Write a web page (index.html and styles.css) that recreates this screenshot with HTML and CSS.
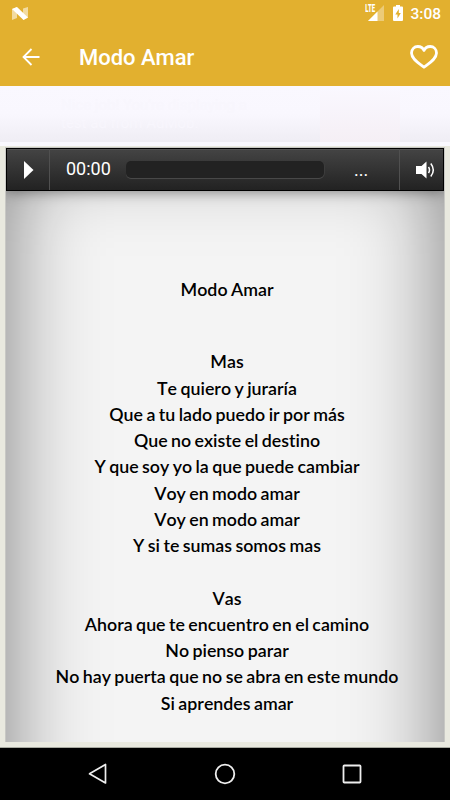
FILE: index.html
```html
<!DOCTYPE html>
<html lang="es">
<head>
    <meta charset="UTF-8">
    <meta name="viewport" content="width=device-width, initial-scale=1.0">
    <title>Modo Amar</title>
    <link rel="stylesheet" href="styles.css">
</head>
<body>
    <div class="screen">
        <header class="header">
            <div class="status-bar">
                <svg class="n-logo" width="16" height="13" viewBox="0 0 16 13">
                    <path d="M0 2 L5 0 V11 L0 13 Z M11 1.5 L16 0 V10.5 L11 13 Z" fill="#fff" opacity="0.55"/>
                    <path d="M0 2 L5 0 L16 10.5 L11.5 13 Z" fill="#fff"/>
                </svg>
                <div class="status-icons">
                    <span class="lte">LTE</span>
                    <svg class="signal" width="16" height="16" viewBox="0 0 16 16">
                        <path d="M0 16 L16 0 V16 Z" fill="#fff" opacity="0.35"/>
                        <path d="M0 16 L9.5 6.5 V16 Z" fill="#fff"/>
                    </svg>
                    <svg class="battery" width="10" height="16" viewBox="0 0 10 16">
                        <path d="M3 0 H7 V1.5 H9 Q10 1.5 10 2.5 V15 Q10 16 9 16 H1 Q0 16 0 15 V2.5 Q0 1.5 1 1.5 H3 Z" fill="#fff"/>
                        <path d="M5.8 4 L2.3 9.5 H4.5 V13.5 L7.8 8 H5.8 Z" fill="#e2b02f"/>
                    </svg>
                    <span class="clock">3:08</span>
                </div>
            </div>
            <div class="app-bar">
                <svg width="18" height="18" viewBox="0 0 18 18" fill="none" stroke="#fff" stroke-width="1.8">
                    <path d="M9.5 1 L1.5 9 L9.5 17 M1.5 9 H17.5"/>
                </svg>
                <h1 class="title">Modo Amar</h1>
                <svg class="heart" width="28" height="24" viewBox="0 0 28 24" fill="none" stroke="#fff" stroke-width="2.8" stroke-linejoin="round">
                    <path d="M14 22.2 C9.5 18.6 1.5 14.2 1.5 8 C1.5 4.3 4.2 1.5 7.8 1.5 C10.7 1.5 13 3 14 5.4 C15 3 17.3 1.5 20.2 1.5 C23.8 1.5 26.5 4.3 26.5 8 C26.5 14.2 18.5 18.6 14 22.2 Z"/>
                </svg>
            </div>
        </header>

        <div class="ad">
            <p class="ad-text">Nice job! You're displaying a<br>test ad from AdMob.</p>
            <div class="ad-logo"></div>
        </div>

        <main class="page">
            <div class="sheet">
                <div class="paper">
                    <div class="player">
                        <div class="play">
                            <svg width="10" height="18" viewBox="0 0 10 18"><path d="M0 0 L9.5 9 L0 18 Z" fill="#fff"/></svg>
                        </div>
                        <div class="scrubber">
                            <span class="time">00:00</span>
                            <div class="track"></div>
                            <span class="duration">...</span>
                        </div>
                        <div class="volume">
                            <svg width="20" height="18" viewBox="0 0 20 18" fill="none" stroke="#fff" stroke-width="1.5">
                                <path d="M0 5 H5.5 L10.5 0.5 V17.5 L5.5 13 H0 Z" fill="#fff" stroke="none"/>
                                <path d="M12.5 6 Q14.5 9 12.5 12 M14.8 2.5 Q19.8 9 14.8 15.5"/>
                            </svg>
                        </div>
                    </div>
                    <div class="lyrics">
                        <h2>Modo Amar</h2>
                        <p>
                            Mas<br>
                            Te quiero y juraría<br>
                            Que a tu lado puedo ir por más<br>
                            Que no existe el destino<br>
                            Y que soy yo la que puede cambiar<br>
                            Voy en modo amar<br>
                            Voy en modo amar<br>
                            Y si te sumas somos mas
                        </p>
                        <p>
                            Vas<br>
                            Ahora que te encuentro en el camino<br>
                            No pienso parar<br>
                            No hay puerta que no se abra en este mundo<br>
                            Si aprendes amar
                        </p>
                    </div>
                </div>
            </div>
        </main>

        <nav class="nav-bar">
            <svg width="20" height="22" viewBox="0 0 20 22" fill="none" stroke="#eee" stroke-width="1.7" stroke-linejoin="round">
                <path d="M17.5 1.5 V20 L1.5 10.8 Z"/>
            </svg>
            <svg width="22" height="22" viewBox="0 0 22 22" fill="none" stroke="#eee" stroke-width="1.8">
                <circle cx="11" cy="11" r="9.3"/>
            </svg>
            <svg width="20" height="20" viewBox="0 0 20 20" fill="none" stroke="#eee" stroke-width="1.8">
                <rect x="1.5" y="1.5" width="17" height="17" rx="0.8"/>
            </svg>
        </nav>
    </div>
</body>
</html>
```
FILE: styles.css
```css
* {
    box-sizing: border-box;
}

body {
    margin: 0;
    font-family: Roboto, sans-serif;
    background: #000;
}

.screen {
    display: flex;
    flex-direction: column;
    height: 800px;
    overflow: hidden;
}

.header {
    height: 86px;
    background: #e2b02f;
    color: #fff;
}

.status-bar {
    display: flex;
    justify-content: space-between;
    align-items: flex-start;
    height: 28px;
    padding: 5px 9px 0 12px;
}

.n-logo {
    margin-top: 2px;
}

.status-icons {
    display: flex;
    align-items: flex-start;
}

.lte {
    margin-right: -10px;
    font-size: 10px;
    line-height: 8px;
    font-weight: 900;
    transform: scaleX(0.6);
}

.battery {
    margin: 0 7px 0 9px;
}

.clock {
    font-size: 15.5px;
    line-height: 18px;
    font-weight: 500;
}

.app-bar {
    display: flex;
    align-items: center;
    height: 58px;
    padding: 0 12px 0 22px;
}

.title {
    flex: 1;
    margin: 0 0 0 39px;
    font-size: 22px;
    font-weight: 500;
}

/* ad banner, faded out */
.ad {
    display: flex;
    justify-content: space-between;
    height: 60px;
    padding: 10px 50px 4px 61px;
    background: linear-gradient(#faf8ff 0, #f9f7fe 28px, #efedf4 56px, #f9f8fe 56px);
}

.ad-text {
    margin: 0;
    font-size: 15px;
    line-height: 18px;
    color: #f8f6fd;
}

.ad-logo {
    width: 80px;
    margin: -10px 0 0;
    background: linear-gradient(#faf8ff, #f5eff5);
}

.page {
    flex: 1;
    padding: 1px 5px 5px;
    background: #e9e9df;
    border-bottom: 1px solid #a8aaa1;
}

.sheet {
    height: 595px;
    border: solid #c8c8c4;
    border-width: 1px 1px 0;
    background: #f4f4f4;
    overflow: hidden;
}

/* runs on below the visible part */
.paper {
    height: 900px;
    box-shadow: inset 0 0 90px rgba(0, 0, 0, 0.5);
}

.player {
    display: flex;
    height: 43px;
    border: 1px solid #000;
    background: linear-gradient(#444, #222);
    box-shadow: inset 0 1px 0 #555, 0 1px 12px rgba(0, 0, 0, 0.4);
    color: #fff;
}

.play {
    display: flex;
    align-items: center;
    width: 43px;
    padding-left: 17px;
    border-right: 1px solid #505050;
}

.scrubber {
    flex: 1;
    display: flex;
    align-items: center;
    padding-left: 16px;
}

.time {
    width: 60px;
    font-size: 18px;
    line-height: 20px;
    margin-top: -1px;
}

.track {
    width: 198px;
    height: 17px;
    border-radius: 5px;
    background: #222;
    box-shadow: 0 1px 0 #484848, 1px 0 0 #3c3c3c;
}

.duration {
    margin-left: 30px;
    font-size: 18px;
}

.volume {
    display: flex;
    align-items: center;
    width: 44px;
    padding-left: 16px;
    border-left: 1px solid #505050;
}

.lyrics {
    padding: 85px 0 0 4px;
    font-family: Lato, sans-serif;
    font-size: 17.8px;
    line-height: 26.25px;
    font-weight: 600;
    word-spacing: -1px;
    font-kerning: none;
    font-variant-ligatures: none;
    text-align: center;
    color: #000;
}

.lyrics h2 {
    margin: 0 0 46px;
    font-size: inherit;
    font-weight: inherit;
}

.lyrics p {
    margin: 0 0 26.25px;
}

.nav-bar {
    display: flex;
    align-items: center;
    justify-content: space-between;
    height: 52px;
    padding: 0 88px;
    background: #000;
}
```
